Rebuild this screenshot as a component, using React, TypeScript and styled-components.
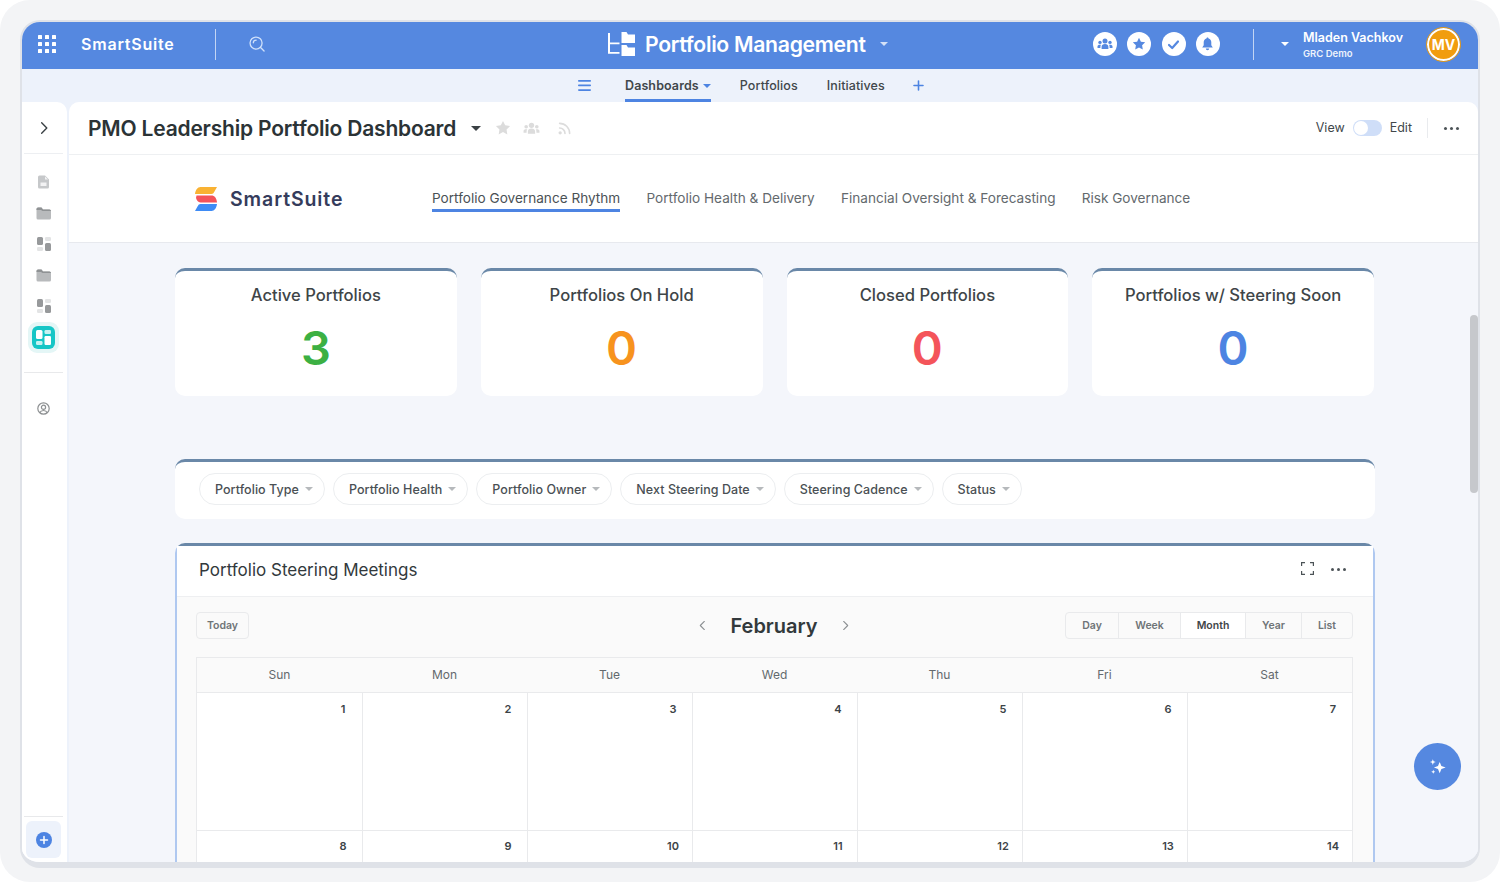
import React from 'react';
import styled, { createGlobalStyle } from 'styled-components';

const Global = createGlobalStyle`
  html, body { margin: 0; padding: 0; background: #fff; }
  body { font-family: Inter, "Liberation Sans", sans-serif; color: #2e3538; overflow: hidden; }
  * { box-sizing: border-box; }
`;

const Frame = styled.div`
  width: 1500px; height: 882px; background: #f3f4f6; border-radius: 30px;
  padding: 20px 20px 14px 20px;
`;
const Win = styled.div`
  position: relative; height: 848px; background: #f4f6fb; overflow: hidden;
  border: 2px solid #dfe2e8; border-bottom-width: 6px; border-radius: 20px;
  display: flex; flex-direction: column;
`;
const Header = styled.header`
  height: 47px; flex: none; background: #5588e0; display: flex; align-items: center; color: #fff;
  position: relative; padding: 0 0 3px 16px;
`;
const Left = styled.div`display: flex; align-items: center; width: 570px; height: 100%;`;
const Brand = styled.span`font-size: 16px; font-weight: 600; letter-spacing: 0.8px; margin-left: 25px; width: 134px; white-space: nowrap;`;
const VLine = styled.span`width: 1px; height: 31px; background: rgba(255,255,255,.65); flex: none;`;
const SearchBox = styled.span`margin-left: 33px; display: flex;`;
const AppTitle = styled.div`display: flex; align-items: center; width: 494px; flex: none;`;
const AppName = styled.span`font-size: 21.2px; font-weight: 600; letter-spacing: -0.3px; margin-left: 10px; white-space: nowrap;`;
const Caret = styled.span<{ $c?: string; $s?: number }>`
  display: inline-block; flex: none; width: 0; height: 0;
  border-left: ${p => p.$s ?? 4}px solid transparent; border-right: ${p => p.$s ?? 4}px solid transparent;
  border-top: ${p => p.$s ?? 4}px solid ${p => p.$c ?? '#fff'};
`;
const AppCaret = styled.span`margin-left: 14px; display: flex; opacity: .75;`;
const Circles = styled.div`display: flex; gap: 10.3px; width: 138px; flex: none; margin-left: -9px;`;
const Circle = styled.span`
  width: 24px; height: 24px; border-radius: 50%; background: #fff; color: #5588e0;
  display: flex; align-items: center; justify-content: center;
`;
const HeaderLine = styled(VLine)`margin-left: 22px;`;
const UserCaret = styled.span`margin-left: 27px; display: flex;`;
const User = styled.div`margin-left: 14px; width: 123px; display: flex; flex-direction: column; gap: 3px; padding-top: 1px;`;
const UserName = styled.span`font-size: 12.5px; font-weight: 600; line-height: 15px; white-space: nowrap;`;
const UserOrg = styled.span`font-size: 9.5px; font-weight: 600; line-height: 11px; opacity: .9;`;
const Avatar = styled.span`
  width: 33px; height: 33px; margin-left: 1px; border-radius: 50%; background: #f19d0f; border: 2px solid #fff; outline: 1px solid #e99a12;
  font-size: 14px; font-weight: 700; display: flex; align-items: center; justify-content: center; flex: none;
`;
const SubNav = styled.nav`
  height: 33px; flex: none; background: #edf2fb; display: flex; align-items: stretch; padding-left: 556px;
  font-size: 12.5px; letter-spacing: .1px; font-weight: 500; color: #41474b;
`;
const Burger = styled.span`display: flex; align-items: center; margin-right: 34px; padding-bottom: 1px;`;
const NavItem = styled.span<{ $active?: boolean }>`
  display: flex; align-items: center; gap: 4px; margin-right: 29px;
  border-bottom: 3px solid ${p => (p.$active ? '#4d84e2' : 'transparent')};
  border-top: 3px solid transparent; font-weight: ${p => (p.$active ? 600 : 500)};
`;
const Plus = styled.span`display: flex; align-items: center; padding-bottom: 1px; margin-left: -1px;`;
const Body = styled.div`flex: 1; min-height: 0; display: flex; gap: 2px; background: #edf2fb;`;
const Side = styled.aside`
  width: 45px; flex: none; background: #fff; border-radius: 0 10px 0 0; display: flex; flex-direction: column; align-items: center; padding-right: 2px;
`;
const SideTop = styled.div`
  height: 52px; width: 39px; flex: none; border-bottom: 1px solid #edeff2; display: flex; align-items: center; justify-content: center; color: #3a4145;
`;
const SideIcons = styled.div`display: flex; flex-direction: column; align-items: center; padding-top: 19px; gap: 13px; flex: 1;`;
const SideIcon = styled.span`height: 18px; display: flex; align-items: center; justify-content: center; color: #bdbfc1;`;
const ActiveWrap = styled.span`
  width: 31px; height: 31px; margin: -6px 0; border-radius: 9px; background: #e4f6f6; display: flex; align-items: center; justify-content: center;
`;
const ActiveTile = styled.span`
  width: 23px; height: 23px; border-radius: 6px; background: #16c6c6; display: flex; align-items: center; justify-content: center;
`;
const SideRule = styled.span`width: 39px; height: 1px; background: #e8e9eb; margin: 12px 0 13px;`;
const SideBottom = styled.div`width: 39px; border-top: 1px solid #e8e9eb; padding: 4px 0; display: flex; justify-content: center; flex: none;`;
const AddBtn = styled.span`width: 35px; height: 37px; border-radius: 6px; background: #edf2fb; display: flex; align-items: center; justify-content: center;`;
const Main = styled.main`flex: 1; min-width: 0; background: #f4f6fb; border-radius: 10px 10px 0 0; overflow: hidden; display: flex; flex-direction: column;`;
const TitleRow = styled.div`
  height: 53px; flex: none; background: #fff; border-bottom: 1px solid #eef0f2; display: flex; align-items: center; padding: 0 19px 0 19px;
`;
const PageTitle = styled.h1`margin: 0; font-size: 21px; font-weight: 600; letter-spacing: -0.2px; color: #2b3336; white-space: nowrap;`;
const TitleCaret = styled.span`margin-left: 15px; display: flex;`;
const GreyIcons = styled.span`display: flex; align-items: center; gap: 12px; margin-left: 14px; color: #dcdcdc;`;
const RssWrap = styled.span`display: flex; margin-left: 6px;`;
const Spacer = styled.span`flex: 1;`;
const ModeText = styled.span`font-size: 12.5px; color: #41474b; padding-bottom: 1px;`;
const Toggle = styled.span`
  width: 29px; height: 16px; border-radius: 8px; background: #cfdef8; margin: 0 8px; position: relative; display: block;
  &::before { content: ''; position: absolute; left: 1px; top: 1px; width: 14px; height: 14px; border-radius: 50%; background: #fff; }
`;
const RowRule = styled.span`width: 1px; height: 20px; background: #e9ebee; margin: 0 16px 0 15px;`;
const Dots = styled.span`display: flex; gap: 3px;
  & > i { width: 3px; height: 3px; border-radius: 50%; background: #4c5357; display: block; }
`;
const LogoBand = styled.div`
  height: 88px; flex: none; background: #fff; border-bottom: 1px solid #e7e9ee; display: flex; align-items: center; padding-left: 126px;
`;
const LogoText = styled.span`font-size: 19.5px; font-weight: 600; color: #353c5c; letter-spacing: .9px; margin-left: 13px; width: 202px;`;
const Tabs = styled.div`display: flex; gap: 26.2px; font-size: 13.6px; color: #63696d;`;
const Tab = styled.span<{ $active?: boolean }>`
  padding: 5px 0 3px; white-space: nowrap; line-height: 16px; border-bottom: 3px solid ${p => (p.$active ? '#4d84e2' : 'transparent')};
  color: ${p => (p.$active ? '#4a5155' : '#63696d')};
`;
const Content = styled.div`width: 1200px; margin-left: 106px; padding-top: 25px; display: flex; flex-direction: column; flex: none;`;
const Stats = styled.div`display: grid; grid-template-columns: repeat(4, 1fr); gap: 24px; width: 1199px;`;
const Stat = styled.div`
  height: 128px; background: #fff; border-radius: 10px; border-top: 3px solid #6a88a8; text-align: center; padding-top: 13px;
`;
const StatLabel = styled.div`font-size: 16.6px; font-weight: 500; color: #3e4548; line-height: 22px; white-space: nowrap;`;
const StatValue = styled.div<{ $c: string }>`font-size: 47px; font-weight: 600; color: ${p => p.$c}; line-height: 56px; margin-top: 14px;`;
const Filters = styled.div`
  margin-top: 63px; height: 60px; background: #fff; border-radius: 10px; border-top: 3px solid #6a88a8;
  display: flex; align-items: center; gap: 8px; padding: 0 24px 3px;
`;
const Pill = styled.span`
  height: 32px; padding: 0 11px 0 15px; border: 1px solid #eceef0; border-radius: 16px; font-size: 12.5px; letter-spacing: .05px; font-weight: 500; color: #4a5054;
  display: flex; align-items: center; gap: 6px; white-space: nowrap;
`;
const Calendar = styled.section`
  margin-top: 24px; height: 340px; background: #fafafa; border: 2px solid #afc8f0; border-top: 3px solid #6a88a8; border-bottom: 0; border-radius: 10px 10px 0 0;
`;
const CalHead = styled.div`
  height: 51px; background: #fff; border-bottom: 1px solid #eeeff1; display: flex; align-items: center; padding: 0 27px 3px 22px; font-size: 17px; color: #32393c;
`;
const CalTitle = styled.span`flex: 1; font-weight: 400;`;
const ExpandBox = styled.span`display: flex; margin: 0 17px 2px 0; color: #4c5357;`;
const CalBar = styled.div`height: 60px; padding: 15px 20px 0 19px; display: flex; align-items: flex-start; position: relative;`;
const GhostBtn = styled.span`
  height: 27px; width: 53px; border: 1px solid #e9eaec; border-radius: 4px; font-size: 10.5px; font-weight: 600; color: #6f7477;
  display: flex; align-items: center; justify-content: center;
`;
const Month = styled.div`flex: 1; display: flex; justify-content: center; align-items: center; height: 27px; gap: 21px; color: #8b8f92; padding-left: 234px;`;
const MonthName = styled.span`font-size: 20px; font-weight: 600; color: #32393c; width: 90px; text-align: center;`;
const Views = styled.div`display: flex; border: 1px solid #e9eaec; border-radius: 4px; height: 27px;`;
const ViewBtn = styled.span<{ $on?: boolean; $w: number }>`
  width: ${p => p.$w}px; display: flex; align-items: center; justify-content: center; font-size: 10.5px; font-weight: 600;
  color: ${p => (p.$on ? '#3f4549' : '#6f7477')}; background: ${p => (p.$on ? '#fff' : 'transparent')};
  & + & { border-left: 1px solid #e9eaec; }
`;
const Grid = styled.div`
  margin: 0 20px 0 19px; border: 1px solid #e9eaec; border-bottom: 0;
  display: grid; grid-template-columns: repeat(7, 1fr); grid-template-rows: 35px 138px 60px;
`;
const Dow = styled.div`font-size: 12px; color: #63696d; display: flex; align-items: center; justify-content: center; border-bottom: 1px solid #e9eaec; padding-bottom: 1px;`;
const Cell = styled.div`
  background: #fff; display: flex; justify-content: flex-end; padding: 9px 11px 0 0;
  border-left: 1px solid #e9eaec; border-bottom: 1px solid #e9eaec;
  &:nth-child(7n + 1) { border-left: 0; }
  &:nth-child(n + 15) { padding-top: 8px; }
`;
const CellNum = styled.span`width: 16px; text-align: center; font-size: 11px; line-height: 14px; font-weight: 600; color: #3c4347; white-space: nowrap;`;
const Scroll = styled.span`position: absolute; right: 0; top: 293px; width: 8px; height: 178px; border-radius: 4px; background: #c6c8cc;`;
const Fab = styled.span`
  position: absolute; left: 1392px; top: 721px; width: 47px; height: 47px; border-radius: 50%; background: #5588e0;
  display: flex; align-items: center; justify-content: center;
`;

const Apps = () => (
  <svg width="18" height="18" viewBox="0 0 18 18" fill="#fff">
    {[0, 7, 14].flatMap(y => [0, 7, 14].map(x => <rect key={`${x}-${y}`} x={x} y={y} width="4" height="4" rx=".6" />))}
  </svg>
);
const Search = () => (
  <svg width="16" height="16" viewBox="0 0 17 17" fill="none" stroke="#cfe0fa" strokeWidth="1.4" strokeLinecap="round">
    <circle cx="7.500" cy="7.500" r="6.400" /><path d="M12.300 12.300 16 16M4.600 7.200a3 3 0 0 1 3-2.800" />
  </svg>
);
const PortfolioIcon = () => (
  <svg width="27" height="24" viewBox="0 0 27 24" fill="#fff">
    <path d="M0 1h2v9.500h9.500v1.800H2v7.600h9.500v1.800H0z" />
    <path d="M13.500 0h5l1.500 2.500h7V11H13.500zM13.500 13h5l1.500 2.500h7V24H13.500z" />
  </svg>
);
const UsersIcon = ({ s = 16, c = 'currentColor' }: { s?: number; c?: string }) => (
  <svg width={s} height={s} viewBox="0 0 16 16" fill={c}>
    <circle cx="8" cy="5" r="2.500" /><circle cx="3" cy="6.400" r="1.700" /><circle cx="13" cy="6.400" r="1.700" />
    <path d="M4.600 13v-2.200C4.600 9 6 8 8 8s3.400 1 3.400 2.800V13zM.5 12v-1.400C.5 9.300 1.500 8.700 3 8.700c.4 0 .7 0 1 .1-.4.5-.6 1.200-.6 2V12zM15.500 12v-1.400c0-1.300-1-1.900-2.500-1.900-.4 0-.7 0-1 .1.400.5.600 1.200.6 2V12z" />
  </svg>
);
const StarIcon = ({ s = 14, c = 'currentColor' }: { s?: number; c?: string }) => (
  <svg width={s} height={s} viewBox="0 0 14 14" fill={c}>
    <path d="M7 .8 8.900 4.700l4.300.6-3.100 3 .7 4.300L7 10.600l-3.800 2 .7-4.300-3.100-3 4.300-.6z" strokeLinejoin="round" />
  </svg>
);
const CheckIcon = () => (
  <svg width="13" height="13" viewBox="0 0 13 13" fill="none" stroke="currentColor" strokeWidth="2.200" strokeLinecap="round" strokeLinejoin="round">
    <path d="M2 7l3.200 3L11 3.500" />
  </svg>
);
const BellIcon = () => (
  <svg width="13" height="14" viewBox="0 0 13 14" fill="currentColor">
    <path d="M6.500.5c.6 0 1 .4 1 1 1.900.5 2.800 2 2.800 4v2.700l1.500 2.300H1.200l1.500-2.300V5.500c0-2 .9-3.500 2.800-4 0-.6.4-1 1-1zM4.800 11.500h3.400a1.700 1.700 0 0 1-3.400 0z" />
  </svg>
);
const BurgerIcon = () => (
  <svg width="13" height="11" viewBox="0 0 13 11" fill="#4d84e2"><rect y="0" width="13" height="1.700" rx=".8" /><rect y="4.600" width="13" height="1.700" rx=".8" /><rect y="9.200" width="13" height="1.700" rx=".8" /></svg>
);
const PlusIcon = () => (
  <svg width="11" height="11" viewBox="0 0 11 11" stroke="#4d84e2" strokeWidth="1.600" strokeLinecap="round"><path d="M5.500 1v9M1 5.500h9" /></svg>
);
const Chevron = ({ dir = 'right', s = 15 }: { dir?: 'left' | 'right'; s?: number }) => (
  <svg width={s} height={s} viewBox="0 0 15 15" fill="none" stroke="currentColor" strokeWidth="1.500" strokeLinecap="round" strokeLinejoin="round">
    <path d={dir === 'right' ? 'M5 2l5.500 5.500L5 13' : 'M10 2L4.500 7.500 10 13'} />
  </svg>
);
const FileIcon = () => (
  <svg width="13" height="14" viewBox="0 0 13 14" fill="currentColor" opacity=".85">
    <path d="M2.500.5H8L12 4.500V12a1.500 1.500 0 0 1-1.500 1.500h-8A1.500 1.500 0 0 1 1 12V2A1.500 1.500 0 0 1 2.500.5z" />
    <path d="M3.500 7.500h6v3.500h-6z" fill="#fff" opacity=".8" /><path d="M8 1.500v3h3" fill="#fff" opacity=".8" />
  </svg>
);
const FolderIcon = () => (
  <svg width="15" height="13" viewBox="0 0 15 13" fill="currentColor">
    <path d="M.5 2A1.500 1.500 0 0 1 2 .5h3.500L7 2.500h6.500A1.500 1.500 0 0 1 15 4v7a1.500 1.500 0 0 1-1.500 1.500H2A1.500 1.500 0 0 1 .5 11z" fill="#b8babc" />
    <path d="M.5 2A1.500 1.500 0 0 1 2 .5h3.500L7 2.500h6.500A1.500 1.500 0 0 1 15 4H6.500L5 3H.5z" fill="#8f9294" />
  </svg>
);
const BoardIcon = ({ a = '#97999b', b = '#e3e4e5' }: { a?: string; b?: string }) => (
  <svg width="14" height="14" viewBox="0 0 14 14">
    <rect x="0" y="0" width="6" height="8" rx="1.500" fill={a} /><rect x="8" y="0" width="6" height="4" rx="1.200" fill={b} />
    <rect x="0" y="10" width="6" height="4" rx="1.200" fill={b} /><rect x="8" y="6" width="6" height="8" rx="1.500" fill={a} />
  </svg>
);
const ActiveBoard = () => (
  <svg width="15" height="15" viewBox="0 0 15 15">
    <rect x="0" y="0" width="6.500" height="9" rx="1.500" fill="#fff" /><rect x="8.500" y="0" width="6.500" height="4" rx="1.200" fill="#c8f1f1" />
    <rect x="0" y="11" width="6.500" height="4" rx="1.200" fill="#c8f1f1" /><rect x="8.500" y="6" width="6.500" height="9" rx="1.200" fill="#fff" />
  </svg>
);
const PersonIcon = () => (
  <svg width="13" height="13" viewBox="0 0 13 13" fill="none" stroke="#8d9092" strokeWidth="1.200">
    <circle cx="6.500" cy="6.500" r="5.700" /><circle cx="6.500" cy="5.300" r="2.100" /><path d="M2.800 10.700c.6-1.500 2-2.200 3.700-2.200s3.100.7 3.700 2.200" />
  </svg>
);
const AddIcon = () => (
  <svg width="16" height="16" viewBox="0 0 16 16"><circle cx="8" cy="8" r="8" fill="#4d84e2" /><path d="M8 4.500v7M4.500 8h7" stroke="#fff" strokeWidth="1.500" strokeLinecap="round" /></svg>
);
const RssIcon = () => (
  <svg width="14" height="14" viewBox="0 0 13 13" fill="none" stroke="#dcdcdc" strokeWidth="1.500" strokeLinecap="round">
    <path d="M1.500 6.500a5 5 0 0 1 5 5M1.500 2.200a9.300 9.300 0 0 1 9.300 9.300" /><circle cx="2" cy="11" r=".8" fill="#dcdcdc" />
  </svg>
);
const Logo = () => (
  <svg width="22" height="24" viewBox="0 0 22 24">
    <path d="M5.500 0H22l-2.800 5A3 3 0 0 1 16.500 7H0C.5 3 2.500 0 5.500 0z" fill="#f9b233" />
    <path d="M1.500 8.500h15c3 0 5 2.500 5.500 7H5.500C3 15.500 1.500 13 1 11z" fill="#f4535a" />
    <path d="M5.500 17H22c-.5 4-2.500 7-5.500 7H0l2.800-5a3 3 0 0 1 2.700-2z" fill="#3e8bf5" />
  </svg>
);
const Expand = () => (
  <svg width="13" height="13" viewBox="0 0 13 13" fill="none" stroke="currentColor" strokeWidth="1.200">
    <path d="M.6 4V.6H4M9 .6h3.400V4M12.400 9v3.400H9M4 12.400H.6V9" />
  </svg>
);
const Sparkle = () => (
  <svg width="18" height="18" viewBox="0 0 16 16" fill="#fff">
    <path d="M9.500 3.500 11 7.200l3.800 1.300L11 9.800l-1.500 3.700L8 9.800 4.400 8.500 8 7.200zM3.400 1l.7 1.900 1.900.7-1.900.7-.7 1.900-.7-1.900-1.900-.7 1.900-.7zM3.800 10.500l.5 1.300 1.300.5-1.300.5-.5 1.300-.5-1.300-1.300-.5 1.300-.5z" />
  </svg>
);
const ThreeDots = () => <Dots><i /><i /><i /></Dots>;

const stats = [
  { label: 'Active Portfolios', value: '3', color: '#3cb043' },
  { label: 'Portfolios On Hold', value: '0', color: '#f7931e' },
  { label: 'Closed Portfolios', value: '0', color: '#f4545a' },
  { label: 'Portfolios w/ Steering Soon', value: '0', color: '#4d84e2' },
];
const pills = ['Portfolio Type', 'Portfolio Health', 'Portfolio Owner', 'Next Steering Date', 'Steering Cadence', 'Status'];
const tabs = ['Portfolio Governance Rhythm', 'Portfolio Health & Delivery', 'Financial Oversight & Forecasting', 'Risk Governance'];
const dows = ['Sun', 'Mon', 'Tue', 'Wed', 'Thu', 'Fri', 'Sat'];
const views: [string, number][] = [['Day', 52], ['Week', 62], ['Month', 65], ['Year', 56], ['List', 51]];

export default function App() {
  return (
    <Frame>
      <Global />
      <Win>
        <Header>
          <Left>
            <Apps />
            <Brand>SmartSuite</Brand>
            <VLine />
            <SearchBox><Search /></SearchBox>
          </Left>
          <AppTitle>
            <PortfolioIcon />
            <AppName>Portfolio Management</AppName>
            <AppCaret><Caret /></AppCaret>
          </AppTitle>
          <Circles>
            <Circle><UsersIcon /></Circle>
            <Circle><StarIcon /></Circle>
            <Circle><CheckIcon /></Circle>
            <Circle><BellIcon /></Circle>
          </Circles>
          <HeaderLine />
          <UserCaret><Caret /></UserCaret>
          <User><UserName>Mladen Vachkov</UserName><UserOrg>GRC Demo</UserOrg></User>
          <Avatar>MV</Avatar>
        </Header>
        <SubNav>
          <Burger><BurgerIcon /></Burger>
          <NavItem $active>Dashboards <Caret $c="#4d84e2" /></NavItem>
          <NavItem>Portfolios</NavItem>
          <NavItem>Initiatives</NavItem>
          <Plus><PlusIcon /></Plus>
        </SubNav>
        <Body>
          <Side>
            <SideTop><Chevron s={14} /></SideTop>
            <SideIcons>
              <SideIcon><FileIcon /></SideIcon>
              <SideIcon><FolderIcon /></SideIcon>
              <SideIcon><BoardIcon /></SideIcon>
              <SideIcon><FolderIcon /></SideIcon>
              <SideIcon><BoardIcon /></SideIcon>
              <ActiveWrap><ActiveTile><ActiveBoard /></ActiveTile></ActiveWrap>
              <SideRule />
              <SideIcon><PersonIcon /></SideIcon>
            </SideIcons>
            <SideBottom><AddBtn><AddIcon /></AddBtn></SideBottom>
          </Side>
          <Main>
            <TitleRow>
              <PageTitle>PMO Leadership Portfolio Dashboard</PageTitle>
              <TitleCaret><Caret $c="#3a4145" $s={5} /></TitleCaret>
              <GreyIcons><StarIcon s={16} /><UsersIcon s={17} /><RssWrap><RssIcon /></RssWrap></GreyIcons>
              <Spacer />
              <ModeText>View</ModeText>
              <Toggle />
              <ModeText>Edit</ModeText>
              <RowRule />
              <ThreeDots />
            </TitleRow>
            <LogoBand>
              <Logo />
              <LogoText>SmartSuite</LogoText>
              <Tabs>
                {tabs.map((t, i) => <Tab key={t} $active={i === 0}>{t}</Tab>)}
              </Tabs>
            </LogoBand>
            <Content>
              <Stats>
                {stats.map(s => (
                  <Stat key={s.label}>
                    <StatLabel>{s.label}</StatLabel>
                    <StatValue $c={s.color}>{s.value}</StatValue>
                  </Stat>
                ))}
              </Stats>
              <Filters>
                {pills.map(p => <Pill key={p}>{p} <Caret $c="#b6b9bc" /></Pill>)}
              </Filters>
              <Calendar>
                <CalHead>
                  <CalTitle>Portfolio Steering Meetings</CalTitle>
                  <ExpandBox><Expand /></ExpandBox>
                  <ThreeDots />
                </CalHead>
                <CalBar>
                  <GhostBtn>Today</GhostBtn>
                  <Month>
                    <Chevron dir="left" s={11} />
                    <MonthName>February</MonthName>
                    <Chevron s={11} />
                  </Month>
                  <Views>
                    {views.map(([v, w]) => <ViewBtn key={v} $w={w} $on={v === 'Month'}>{v}</ViewBtn>)}
                  </Views>
                </CalBar>
                <Grid>
                  {dows.map(d => <Dow key={d}>{d}</Dow>)}
                  {Array.from({ length: 14 }, (_, i) => <Cell key={i}><CellNum>{i + 1}</CellNum></Cell>)}
                </Grid>
              </Calendar>
            </Content>
          </Main>
        </Body>
        <Scroll />
        <Fab><Sparkle /></Fab>
      </Win>
    </Frame>
  );
}
